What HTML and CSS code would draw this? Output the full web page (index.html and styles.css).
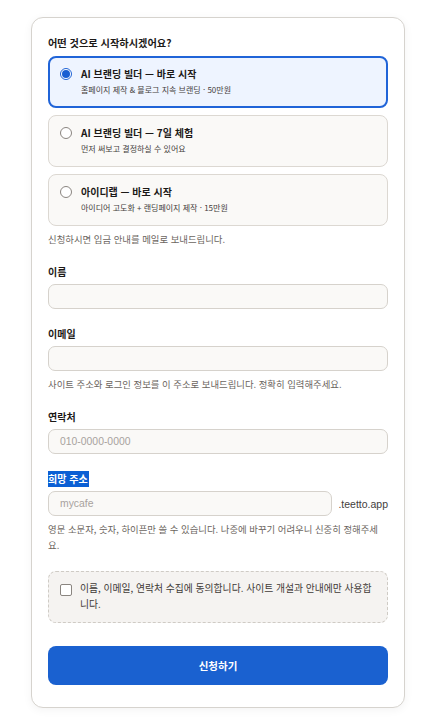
FILE: index.html
```html
<!DOCTYPE html>
<html lang="ko">
<head>
<meta charset="utf-8">
<link rel="stylesheet" href="styles.css">
</head>
<body>
<form class="card">
  <div class="label first">어떤 것으로 시작하시겠어요?</div>
  <div class="options">
    <label class="option selected">
      <span class="radio on"></span>
      <span class="opt-text">
        <span class="opt-title">AI 브랜딩 빌더 — 바로 시작</span>
        <span class="opt-sub">홈페이지 제작 &amp; 블로그 지속 브랜딩 · 50만원</span>
      </span>
    </label>
    <label class="option">
      <span class="radio"></span>
      <span class="opt-text">
        <span class="opt-title">AI 브랜딩 빌더 — 7일 체험</span>
        <span class="opt-sub">먼저 써보고 결정하실 수 있어요</span>
      </span>
    </label>
    <label class="option">
      <span class="radio"></span>
      <span class="opt-text">
        <span class="opt-title">아이디랩 — 바로 시작</span>
        <span class="opt-sub">아이디어 고도화 + 랜딩페이지 제작 · 15만원</span>
      </span>
    </label>
  </div>
  <p class="help">신청하시면 입금 안내를 메일로 보내드립니다.</p>

  <div class="label">이름</div>
  <div class="input"></div>

  <div class="label">이메일</div>
  <div class="input"></div>
  <p class="help">사이트 주소와 로그인 정보를 이 주소로 보내드립니다. 정확히 입력해주세요.</p>

  <div class="label">연락처</div>
  <div class="input"><span class="ph">010-0000-0000</span></div>

  <div class="label"><span class="sel">희망 주소</span></div>
  <div class="addr-row">
    <div class="input grow"><span class="ph">mycafe</span></div>
    <span class="suffix">.teetto.app</span>
  </div>
  <p class="help">영문 소문자, 숫자, 하이픈만 쓸 수 있습니다. 나중에 바꾸기 어려우니 신중히 정해주세요.</p>

  <label class="consent">
    <span class="check"></span>
    <span class="consent-text">이름, 이메일, 연락처 수집에 동의합니다. 사이트 개설과 안내에만 사용합니다.</span>
  </label>

  <button type="button" class="submit">신청하기</button>
</form>
</body>
</html>
```

FILE: styles.css
```css
* { box-sizing: border-box; }
html, body { margin: 0; padding: 0; }
body {
  background: #ffffff;
  font-family: "Noto Sans CJK KR", "Noto Sans", sans-serif;
  color: #1c1917;
  padding: 17px 0 20px 31px;
}
.card {
  width: 374px;
  background: #fff;
  border: 1px solid #d6d3ce;
  border-radius: 12px;
  box-shadow: 0 2px 10px rgba(0,0,0,0.05);
  padding: 18px 16px 22px 16px;
  display: flex;
  flex-direction: column;
}
.label {
  font-size: 10px;
  font-weight: 700;
  line-height: 14px;
  color: #1c1917;
  margin-top: 18px;
  margin-bottom: 5px;
}
.label.first { margin-top: 0; margin-bottom: 6px; font-size: 10.2px; }
.sel { background: #0b5fd4; color: #fff; padding: 0 1px 1px 0; }
.options { display: flex; flex-direction: column; gap: 7px; }
.option {
  display: flex;
  align-items: flex-start;
  gap: 9px;
  height: 52px;
  padding: 10px 11px;
  border: 1px solid #dcd8d2;
  border-radius: 8px;
  background: #faf9f7;
}
.option.selected {
  border: 2px solid #2064d8;
  background: #eef4ff;
  padding: 9px 10px;
}
.radio {
  width: 12px; height: 12px;
  border: 1px solid #8a8580;
  border-radius: 50%;
  background: #fff;
  margin-top: 1px;
  flex: none;
  display: flex; align-items: center; justify-content: center;
}
.radio.on { border-color: #1f63d6; }
.radio.on::after {
  content: "";
  width: 8px; height: 8px;
  border-radius: 50%;
  background: #1a5fd2;
}
.opt-text { display: flex; flex-direction: column; }
.opt-title { font-size: 10px; font-weight: 700; line-height: 14px; color: #1c1917; }
.opt-sub { font-size: 8px; line-height: 12px; margin-top: 3px; color: #44403c; }
.help {
  margin: 5px 0 0 0;
  font-size: 9.4px;
  line-height: 16px;
  color: #6b6560;
}
.input {
  height: 25px;
  border: 1px solid #d6d2cc;
  border-radius: 7px;
  background: #faf9f7;
  padding: 0 11px;
  display: flex;
  align-items: center;
}
.ph { font-family: "Liberation Sans", "Noto Sans", sans-serif; font-size: 10.4px; color: #a8a29e; }
.addr-row { display: flex; align-items: center; gap: 6px; }
.grow { flex: 1; }
.suffix { font-family: "Liberation Sans", sans-serif; font-size: 10.5px; color: #44403c; }
.consent {
  margin-top: 18px;
  display: flex;
  align-items: flex-start;
  gap: 8px;
  padding: 9px 11px 10px 11px;
  border: 1px dashed #cfcbc5;
  border-radius: 8px;
  background: #f5f3f1;
}
.check {
  width: 12px; height: 12px;
  border: 1px solid #8a8580;
  border-radius: 2px;
  background: #fff;
  flex: none;
  margin-top: 3px;
}
.consent-text { font-size: 9.8px; line-height: 15.5px; color: #3f3a36; }
.submit {
  margin-top: 23px;
  height: 39px;
  border: none;
  border-radius: 8px;
  background: #1a61d0;
  color: #fff;
  font-family: "Noto Sans CJK KR", sans-serif;
  font-size: 10.5px;
  font-weight: 700;
}
```
